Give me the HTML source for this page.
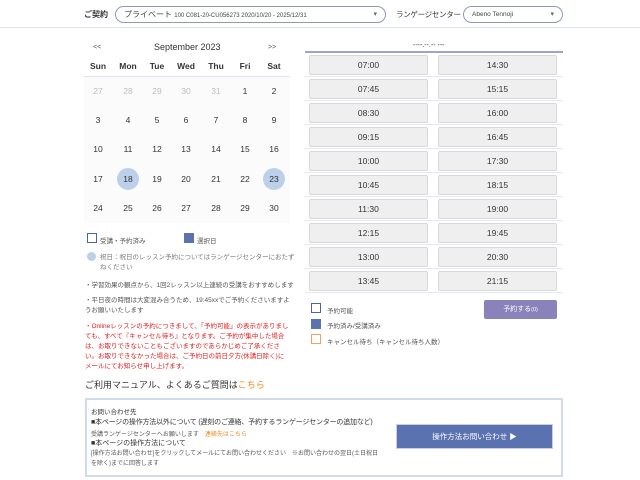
<!DOCTYPE html><html><head><meta charset="utf-8"><style>
*{margin:0;padding:0;box-sizing:border-box}
body{width:640px;height:480px;background:#fff;font-family:"Liberation Sans","Noto Sans CJK JP",sans-serif;color:#333;position:relative;overflow:hidden}
.a{position:absolute;white-space:nowrap}
.sel{position:absolute;border:1px solid #8a9bc0;border-radius:9px;height:17px;font-size:8px;line-height:15px;padding:0 8px;color:#444}
.sel:after{content:"▾";position:absolute;right:8px;top:0;font-size:7px;color:#666}
.d{position:absolute;width:22px;height:22px;line-height:22px;text-align:center;font-size:8.5px;color:#333}
.slot{position:absolute;width:119px;height:20px;background:#efefef;border:1px solid #d8d8d8;border-radius:2px;font-size:8.5px;text-align:center;line-height:18px;color:#333}
.j{font-size:6.5px;color:#555}
</style></head><body>
<div class="a" style="left:0;top:27px;width:640px;height:1px;background:#dde3ee"></div>
<div class="a" style="left:84px;top:9px;font-size:8px;font-weight:bold;color:#333">ご契約</div>
<div class="sel" style="left:115px;top:6px;width:271px">プライベート <span style="font-size:6px">100 C081-20-CU056273 2020/10/20 - 2025/12/31</span></div>
<div class="a" style="left:396px;top:9px;font-size:7.5px;color:#333;letter-spacing:-0.3px">ランゲージセンター</div>
<div class="sel" style="left:463px;top:6px;width:100px;font-size:6.5px">Abeno Tennoji</div>

<div class="a" style="left:93px;top:44px;font-size:7px;color:#555">&lt;&lt;</div>
<div class="a" style="left:154px;top:42px;font-size:9px;color:#333">September 2023</div>
<div class="a" style="left:268px;top:44px;font-size:7px;color:#555">&gt;&gt;</div>
<div class="a" style="left:84px;top:77px;width:206px;height:146px;background:#fbfbfb"></div>
<div class="a" style="left:84px;top:76px;width:206px;height:1px;background:#dde5f0"></div>
<div id="cal"></div>

<div class="a" style="left:87px;top:233px;width:10px;height:10px;border:1.5px solid #4a64a8"></div>
<div class="a j" style="left:100px;top:235px">受講・予約済み</div>
<div class="a" style="left:184px;top:233px;width:10px;height:10px;background:#5a72b0"></div>
<div class="a j" style="left:197px;top:235px">選択日</div>
<div class="a" style="left:87px;top:252px;width:9px;height:9px;border-radius:50%;background:#bcd0ea"></div>
<div class="a j" style="left:100px;top:253px;color:#777;white-space:normal;width:195px;line-height:10px">祝日：祝日のレッスン予約についてはランゲージセンターにおたずねください</div>
<div class="a j" style="left:85px;top:279px">・学習効果の観点から、1回2レッスン以上連続の受講をおすすめします</div>
<div class="a j" style="left:85px;top:296px;white-space:normal;width:205px;line-height:10px">・平日夜の時間は大変混み合うため、19:45xxでご予約くださいますようお願いいたします</div>
<div class="a j" style="left:85px;top:322px;white-space:normal;width:205px;line-height:10px;color:#e02020">・Onlineレッスンの予約につきまして、「予約可能」の表示がありましても、すべて『キャンセル待ち』となります。ご予約が集中した場合は、お取りできないこともございますのであらかじめご了承ください。お取りできなかった場合は、ご予約日の前日夕方(休講日除く)にメールにてお知らせ申し上げます。</div>
<div class="a" style="left:85px;top:378px;font-size:9px;color:#333">ご利用マニュアル、よくあるご質問は<span style="color:#f08a20">こちら</span></div>

<div class="a" style="left:413px;top:42px;font-size:7px;color:#333">----.--.-- ---</div>
<div class="a" style="left:305px;top:51px;width:258px;height:2px;background:#9aa6c4"></div>
<div id="slots"></div>

<div class="a" style="left:311px;top:303px;width:10px;height:10px;border:1.5px solid #4a64a8"></div>
<div class="a j" style="left:327px;top:305px">予約可能</div>
<div class="a" style="left:311px;top:319px;width:10px;height:10px;background:#5a72b0"></div>
<div class="a j" style="left:327px;top:320px">予約済み/受講済み</div>
<div class="a" style="left:311px;top:334px;width:10px;height:10px;border:1.5px solid #f0a060"></div>
<div class="a j" style="left:327px;top:336px">キャンセル待ち（キャンセル待ち人数）</div>
<div class="a" style="left:484px;top:300px;width:73px;height:19px;background:#8a82bb;border-radius:2px;color:#fff;font-size:7px;text-align:center;line-height:19px">予約する<span style="font-size:5.5px">(0)</span></div>

<div class="a" style="left:85px;top:398px;width:478px;height:79px;border:2px solid #cfdcee;background:#fff"></div>
<div class="a j" style="left:91px;top:406px;color:#333;font-size:6.5px">お問い合わせ先</div>
<div class="a" style="left:91px;top:417px;color:#333;font-size:7px;letter-spacing:-0.2px">■本ページの操作方法以外について (遅刻のご連絡、予約するランゲージセンターの追加など)</div>
<div class="a j" style="left:91px;top:429px;font-size:6px">受講ランゲージセンターへお願いします　<span style="color:#f08a20">連絡先はこちら</span></div>
<div class="a" style="left:91px;top:438px;color:#333;font-size:7px">■本ページの操作方法について</div>
<div class="a j" style="left:91px;top:449px;white-space:normal;width:290px;line-height:10px;font-size:6px">[操作方法お問い合わせ]をクリックしてメールにてお問い合わせください　※お問い合わせの翌日(土日祝日を除く)までに回答します</div>
<div class="a" style="left:396px;top:424px;width:157px;height:25px;background:#5a72b0;border:1px solid #c8d0e0;color:#fff;font-size:7.5px;text-align:center;line-height:23px">操作方法お問い合わせ ▶</div>

<script>
var xs=[98,128,157,186,216,245,274],names=["Sun","Mon","Tue","Wed","Thu","Fri","Sat"],h="";
for(var i=0;i<7;i++)h+='<div class="d" style="left:'+(xs[i]-11)+'px;top:55px;font-size:8.5px;font-weight:bold;color:#333">'+names[i]+'</div>';
var ys=[91,120,149,179,208],days=[27,28,29,30,31];for(var n=1;n<=30;n++)days.push(n);
for(var k=0;k<35;k++){var r=Math.floor(k/7),c=k%7,st="";
 if(k<5)st="color:#bbb;";
 if(days[k]==18&&k>5||days[k]==23&&k>5)st+="border-radius:50%;background:#bcd0ea;";
 h+='<div class="d" style="left:'+(xs[c]-11)+'px;top:'+(ys[r]-11)+'px;'+st+'">'+days[k]+'</div>';}
document.getElementById("cal").innerHTML=h;
var L=["07:00","07:45","08:30","09:15","10:00","10:45","11:30","12:15","13:00","13:45"],R=["14:30","15:15","16:00","16:45","17:30","18:15","19:00","19:45","20:30","21:15"],s="";
for(var i=0;i<10;i++){var y=55+i*24;
 s+='<div class="slot" style="left:309px;top:'+y+'px">'+L[i]+'</div><div class="slot" style="left:438px;top:'+y+'px">'+R[i]+'</div>';
 s+='<div class="a" style="left:305px;top:'+(y+21)+'px;width:258px;height:1px;background:#e3e9f3"></div>';}
document.getElementById("slots").innerHTML=s;
</script>
</body></html>
